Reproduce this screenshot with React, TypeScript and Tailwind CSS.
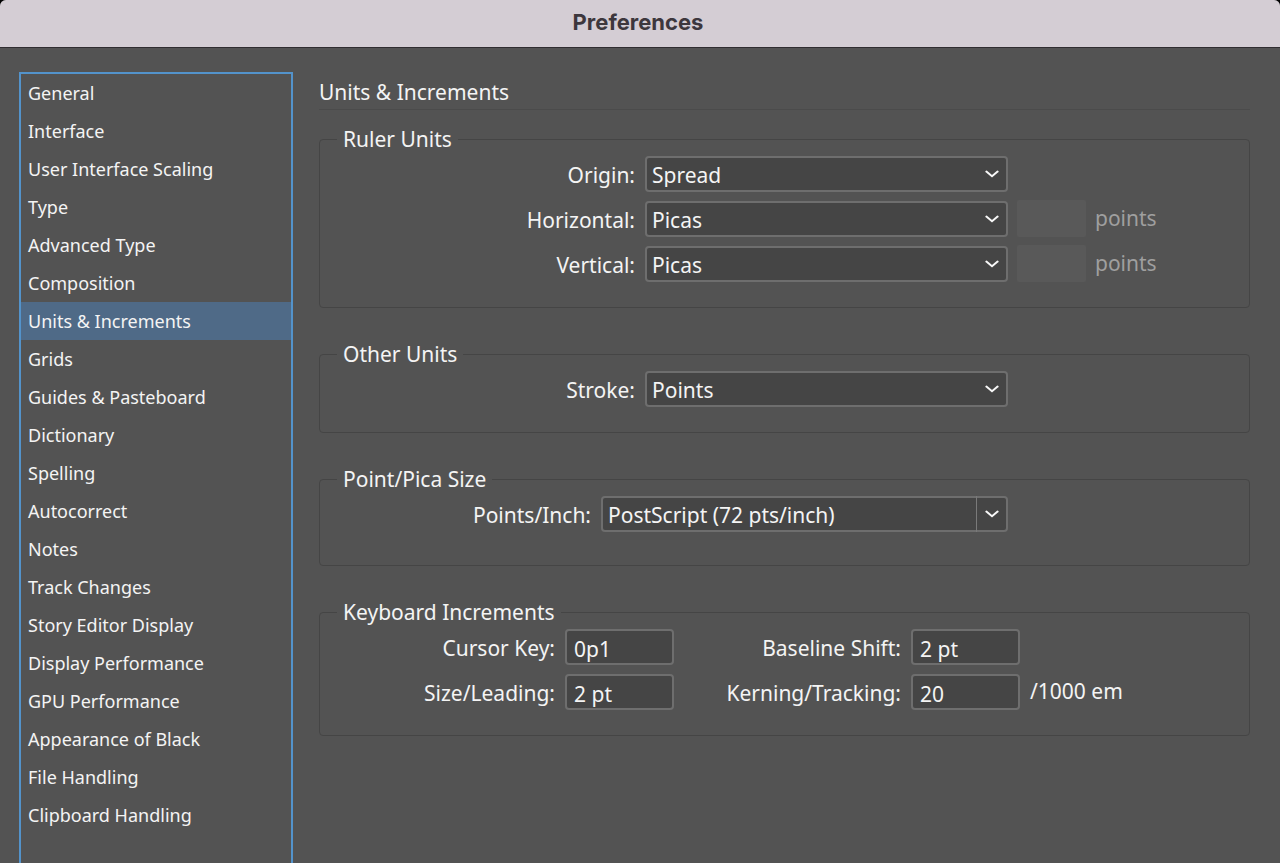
import React, { useState } from "react";

const SECTIONS = [
  "General",
  "Interface",
  "User Interface Scaling",
  "Type",
  "Advanced Type",
  "Composition",
  "Units & Increments",
  "Grids",
  "Guides & Pasteboard",
  "Dictionary",
  "Spelling",
  "Autocorrect",
  "Notes",
  "Track Changes",
  "Story Editor Display",
  "Display Performance",
  "GPU Performance",
  "Appearance of Black",
  "File Handling",
  "Clipboard Handling",
];

function Group({ title, className, children }: { title: string; className: string; children: React.ReactNode }) {
  return (
    <fieldset className={`min-w-0 rounded-[4px] border border-[#454545] pt-[5px] ${className}`}>
      <legend className="ml-[17px] px-[6px] leading-6">{title}</legend>
      {children}
    </fieldset>
  );
}

function Chevron() {
  return (
    <svg
      className="pointer-events-none absolute top-[14px] right-[9px] h-2 w-[14px]"
      viewBox="0 0 14 8"
      fill="none"
      stroke="#f8f8f8"
      strokeWidth="2"
      strokeLinecap="round"
      strokeLinejoin="miter"
      aria-hidden="true"
    >
      <path d="M1.4 1.6 L7 6.2 L12.6 1.6" />
    </svg>
  );
}

interface DropdownProps {
  id: string;
  label: string;
  value: string;
  options: string[];
  labelWidth?: string;
  width?: string;
  split?: boolean;
  children?: React.ReactNode;
}

function Dropdown({
  id,
  label,
  value,
  options,
  labelWidth = "w-[315px]",
  width = "w-[363px]",
  split = false,
  children,
}: DropdownProps) {
  return (
    <div className="flex h-9 items-center">
      <label htmlFor={id} className={`shrink-0 pt-0.5 text-right ${labelWidth}`}>
        {label}
      </label>
      <div className={`relative ml-[10px] shrink-0 ${width}`}>
        <select
          id={id}
          defaultValue={value}
          className="block h-9 w-full appearance-none rounded-[4px] border-2 border-[#6e6e6e] bg-[#454545] pt-0.5 pr-9 pl-[5px] outline-none"
        >
          {options.map((option) => (
            <option key={option}>{option}</option>
          ))}
        </select>
        {split && <span className="pointer-events-none absolute inset-y-0 right-[31px] w-px bg-[#7a7a7a]" />}
        <Chevron />
      </div>
      {children}
    </div>
  );
}

function CustomPoints({ label }: { label: string }) {
  return (
    <label className="ml-[9px] flex items-center gap-[9px] pb-0.5 text-[#9f9f9f]">
      <input
        disabled
        aria-label={label}
        className="h-[37px] w-[69px] rounded-[2px] bg-[#595959] px-2"
      />
      points
    </label>
  );
}

function Field({ id, label, value }: { id: string; label: string; value: string }) {
  return (
    <>
      <label htmlFor={id} className="pt-0.5 text-right whitespace-nowrap">
        {label}
      </label>
      <input
        id={id}
        defaultValue={value}
        className="h-9 w-full rounded-[4px] border-2 border-[#6e6e6e] bg-[#454545] px-[7px] pt-1 outline-none"
      />
    </>
  );
}

const RULERS = ["Points", "Picas", "Inches", "Millimeters", "Centimeters"];

export default function App() {
  const [selected, setSelected] = useState("Units & Increments");

  return (
    <div className="bg-black">
      <div className="flex min-h-screen flex-col overflow-hidden rounded-t-md bg-[#535353] font-['Noto_Sans',sans-serif] text-[21px] leading-6 text-[#f4f4f4]">
        <header className="flex h-12 items-center justify-center border-b border-[#302d31] bg-[#d4cdd4] pr-1 pb-1">
          <h1 className="font-['Inter',sans-serif] text-[22px] font-bold text-[#3d373d]">Preferences</h1>
        </header>

        <div className="flex flex-1 pt-6 pr-[30px] pl-[19px]">
          <nav
            aria-label="Preference sections"
            className="flex w-[274px] shrink-0 flex-col border-2 border-b-0 border-[#5393cb]"
          >
            {SECTIONS.map((name) => (
              <button
                key={name}
                type="button"
                aria-current={name === selected ? "page" : undefined}
                onClick={() => setSelected(name)}
                className={`h-[38px] w-full pl-[7px] text-left text-lg leading-6 ${
                  name === selected ? "bg-[#4f6a87]" : ""
                }`}
              >
                {name}
              </button>
            ))}
          </nav>

          <main className="ml-[26px] min-w-0 flex-1 pt-2">
            <h2 className="border-b border-[#4b4b4b] pb-[5px]">Units &amp; Increments</h2>

            <div className="mt-[17px] flex flex-col gap-[34px]">
              <Group title="Ruler Units" className="pb-[25px]">
                <div className="flex flex-col gap-[9px]">
                  <Dropdown id="origin" label="Origin:" value="Spread" options={["Spread", "Page", "Spine"]} />
                  <Dropdown id="horizontal" label="Horizontal:" value="Picas" options={RULERS}>
                    <CustomPoints label="Horizontal custom points" />
                  </Dropdown>
                  <Dropdown id="vertical" label="Vertical:" value="Picas" options={RULERS}>
                    <CustomPoints label="Vertical custom points" />
                  </Dropdown>
                </div>
              </Group>

              <Group title="Other Units" className="pb-[25px]">
                <Dropdown id="stroke" label="Stroke:" value="Points" options={["Points", "Millimeters", "Inches"]} />
              </Group>

              <Group title="Point/Pica Size" className="pb-[33px]">
                <Dropdown
                  id="points-inch"
                  label="Points/Inch:"
                  value="PostScript (72 pts/inch)"
                  options={["PostScript (72 pts/inch)", "Traditional (72.27 pts/inch)"]}
                  labelWidth="w-[271px]"
                  width="w-[407px]"
                  split
                />
              </Group>

              <Group title="Keyboard Increments" className="pb-[25px]">
                <div className="grid grid-cols-[235px_109px_217px_109px_auto] items-center gap-x-[10px] gap-y-[9px]">
                  <Field id="cursor-key" label="Cursor Key:" value="0p1" />
                  <Field id="baseline-shift" label="Baseline Shift:" value="2 pt" />
                  <span />
                  <Field id="size-leading" label="Size/Leading:" value="2 pt" />
                  <Field id="kerning" label="Kerning/Tracking:" value="20" />
                  <span className="pb-0.5">/1000 em</span>
                </div>
              </Group>
            </div>
          </main>
        </div>
      </div>
    </div>
  );
}
